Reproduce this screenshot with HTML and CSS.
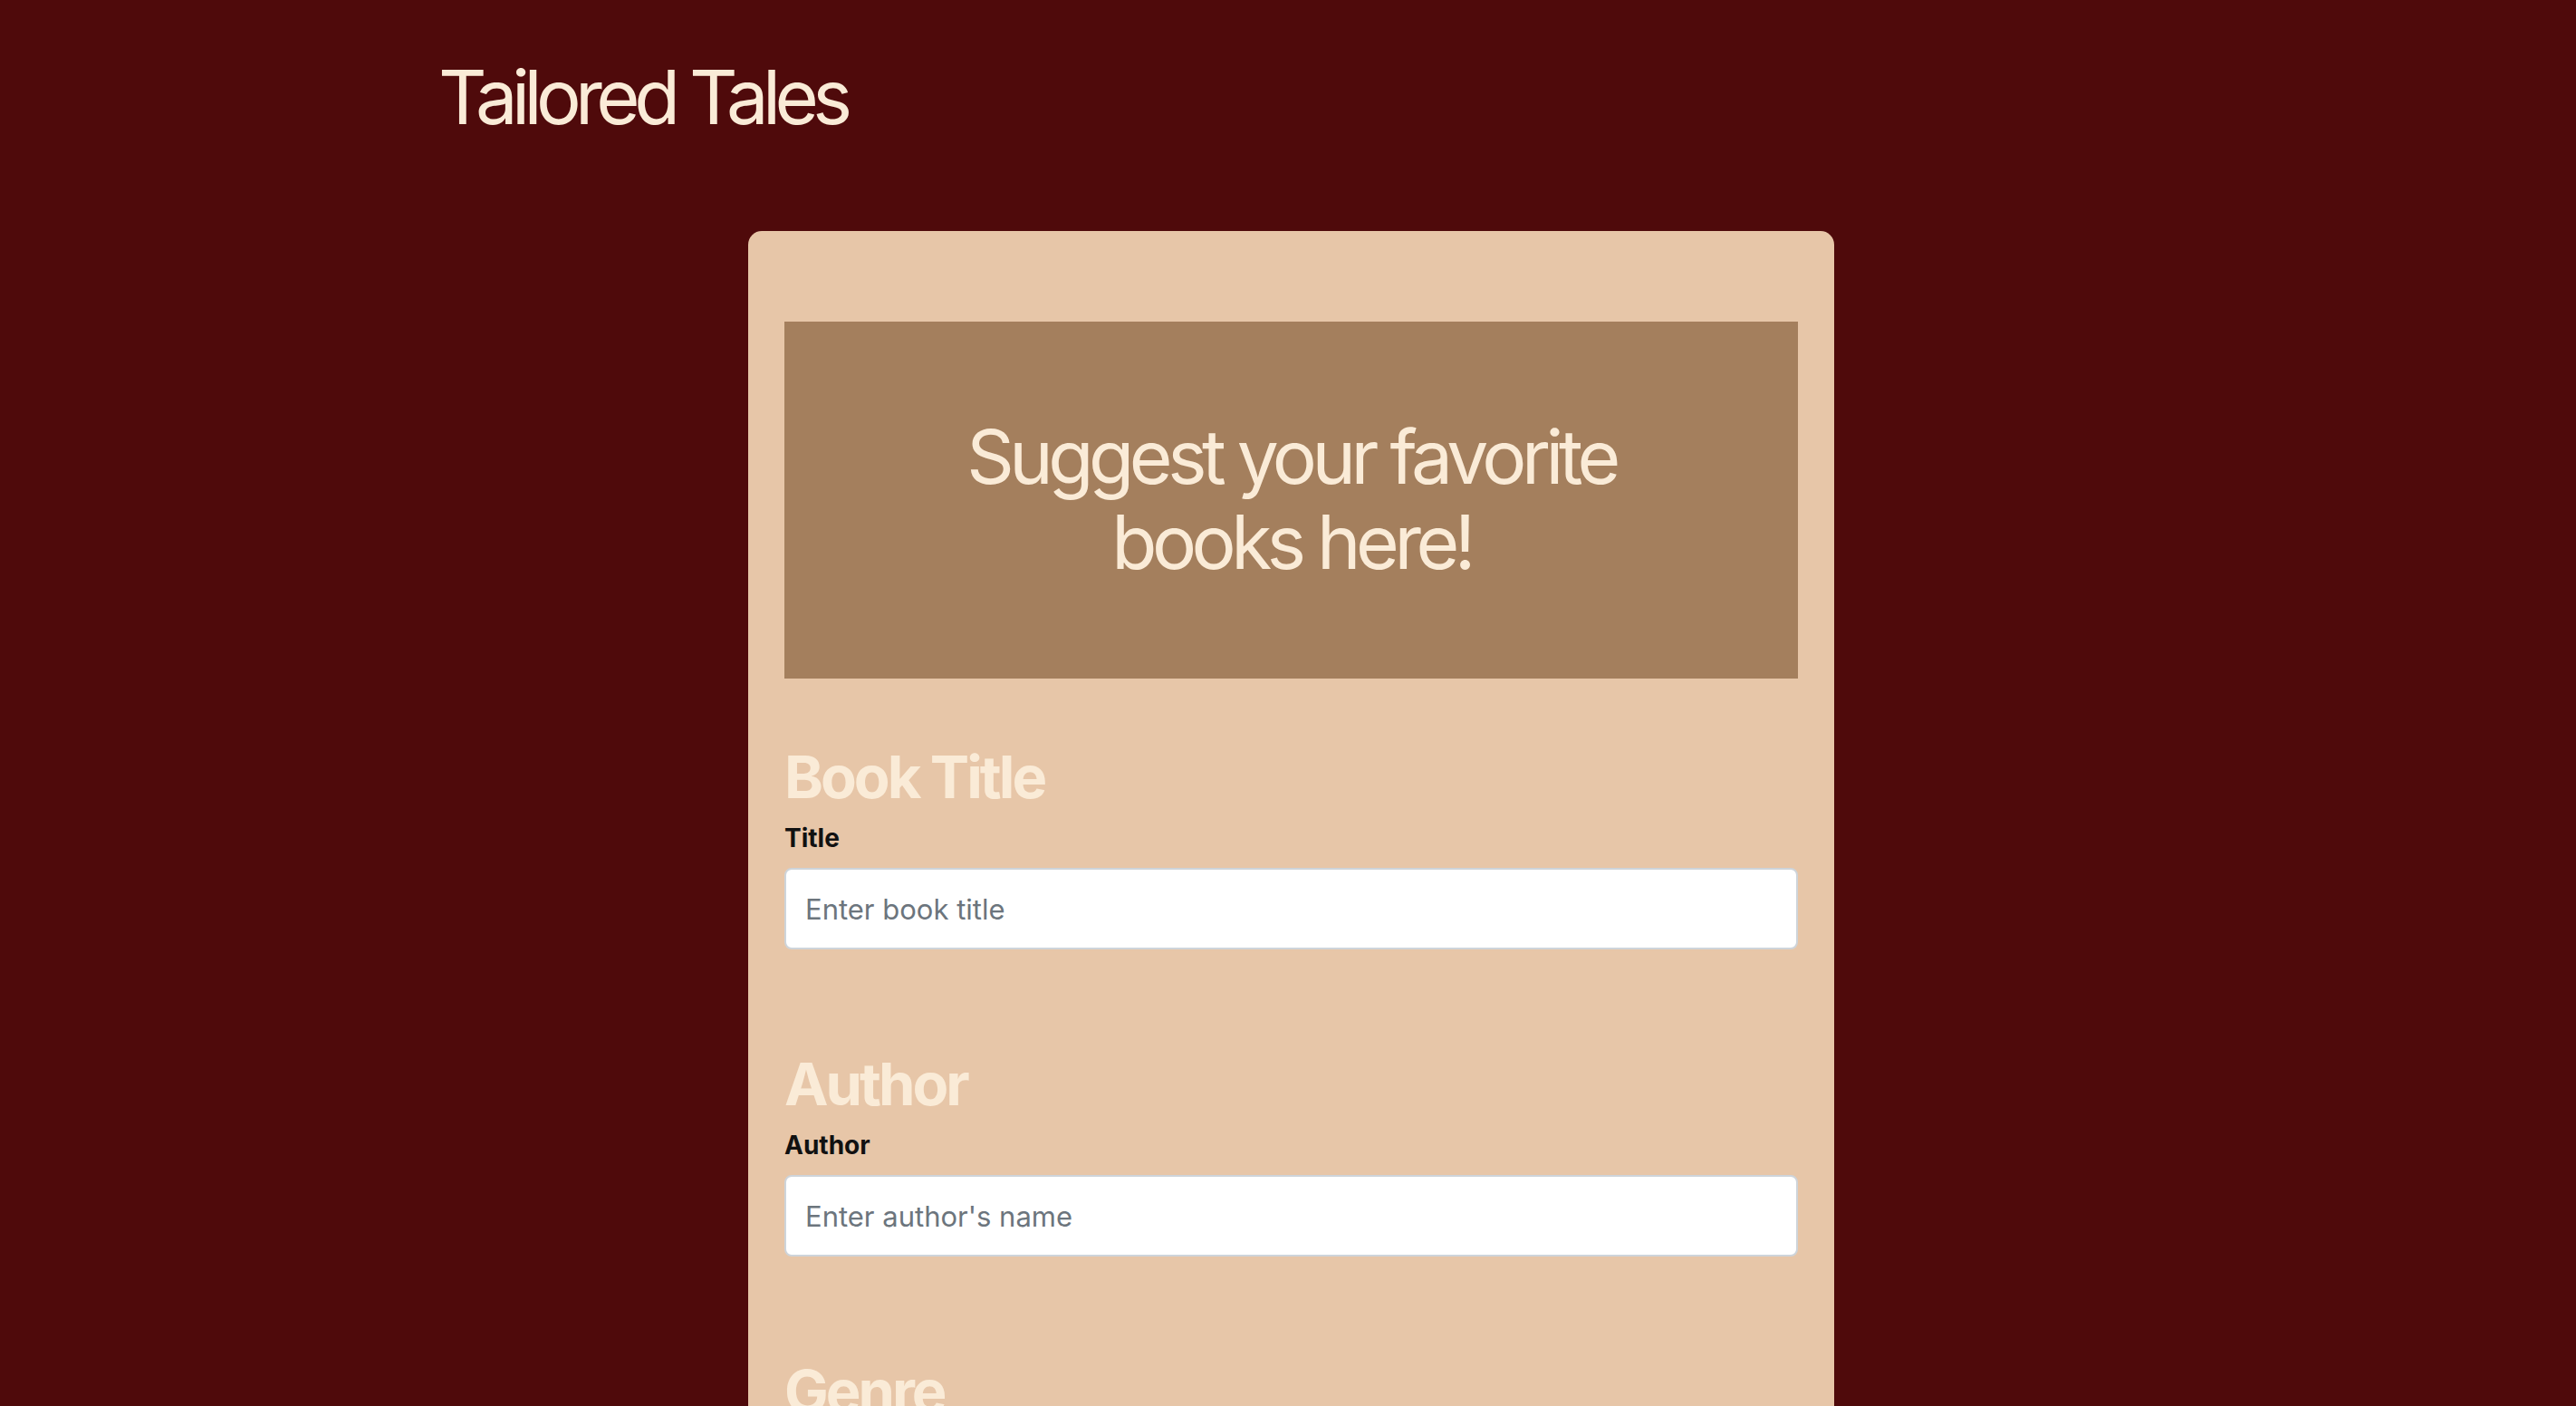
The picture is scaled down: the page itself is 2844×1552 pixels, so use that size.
FILE: index.html
```html
<!DOCTYPE html>
<html lang="en">
<head>
  <meta charset="UTF-8" />
  <title>Tailored Tales</title>
  <link rel="stylesheet" href="styles.css">
</head>
<body>
  <header class="site-header">
    <div class="brand">Tailored Tales</div>
  </header>

  <main class="card">
    <div class="banner">
      <h1 class="banner-title">Suggest your favorite books here!</h1>
    </div>

    <form class="suggest-form">
      <section class="form-section">
        <h2 class="section-title">Book Title</h2>
        <label for="title" class="field-label">Title</label>
        <input type="text" id="title" class="field-input" placeholder="Enter book title">
      </section>

      <section class="form-section">
        <h2 class="section-title">Author</h2>
        <label for="author" class="field-label">Author</label>
        <input type="text" id="author" class="field-input" placeholder="Enter author's name">
      </section>

      <section class="form-section">
        <h2 class="section-title">Genre</h2>
        <label for="genre" class="field-label">Genre</label>
        <input type="text" id="genre" class="field-input" placeholder="Enter genre">
      </section>

      <section class="form-section">
        <button type="submit" class="submit-btn">Submit</button>
      </section>
    </form>
  </main>
</body>
</html>
```

FILE: styles.css
```css
body {
  margin: 0;
  background-color: #4f0a0b;
  font-family: Inter, "Noto Sans", sans-serif;
}

.site-header {
  padding: 57px 0 98px 484px;
}

.brand {
  font-size: 83px;
  line-height: 100px;
  color: #faebd7;
  letter-spacing: -6.6px;
}

.card {
  width: 1119px;
  margin-left: 826px;
  padding: 100px 40px 60px;
  background-color: #e7c6a8;
  border-radius: 15px;
}

.banner {
  background-color: #a47f5d;
  padding: 103px 20px;
  text-align: center;
}

.banner-title {
  max-width: 780px;
  margin: 0 auto;
  font-size: 82px;
  line-height: 94px;
  font-weight: 400;
  color: #faebd7;
  letter-spacing: -5.5px;
}

.form-section {
  padding-top: 70px;
  margin-bottom: 40px;
}

.section-title {
  margin: 0 0 9px;
  font-size: 65px;
  line-height: 78px;
  font-weight: 700;
  color: #faebd7;
  letter-spacing: -3px;
}

.field-label {
  display: block;
  margin-bottom: 13px;
  font-size: 28px;
  line-height: 39px;
  font-weight: 700;
  color: #111;
}

.field-input {
  display: block;
  box-sizing: border-box;
  width: 100%;
  height: 90px;
  padding: 0 21px;
  font-family: Inter, "Noto Sans", sans-serif;
  font-size: 31px;
  color: #212529;
  background-color: #fff;
  border: 2px solid #ced4da;
  border-radius: 8px;
}

.field-input::placeholder {
  color: #6c757d;
}

.submit-btn {
  padding: 20px 40px;
  font-size: 31px;
  color: #faebd7;
  background-color: #4f0a0b;
  border: none;
  border-radius: 8px;
}
```
